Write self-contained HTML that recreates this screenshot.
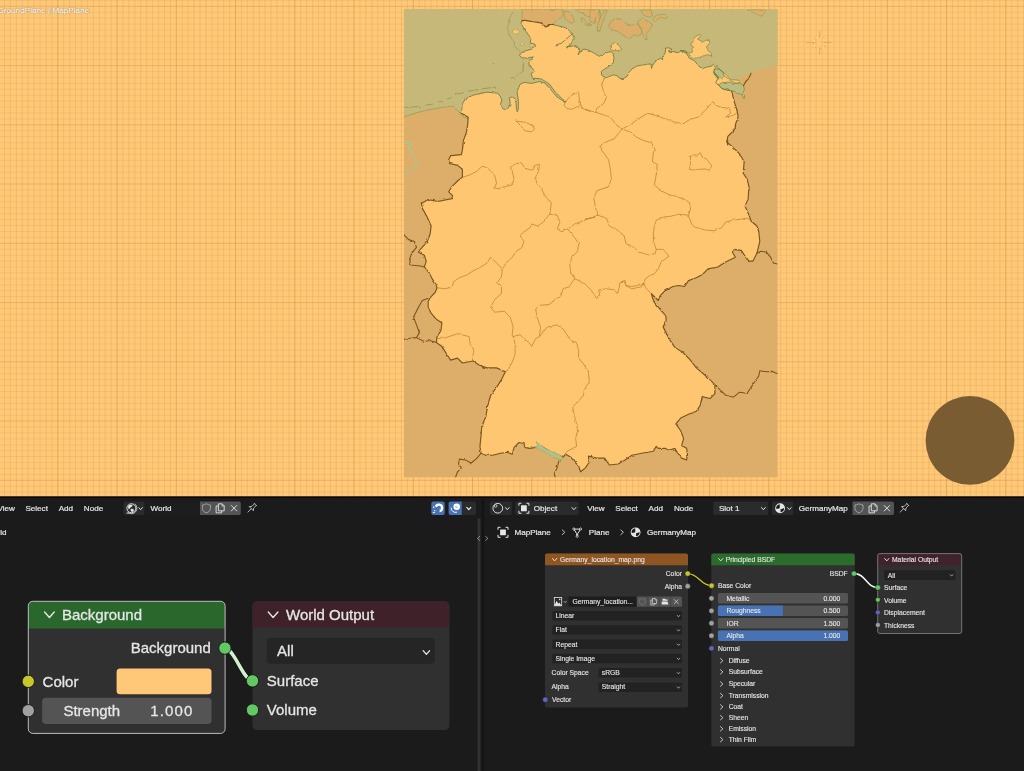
<!DOCTYPE html>
<html lang="en">
<head>
<meta charset="utf-8">
<title>Blender – GermanyMap</title>
<style>
html,body{margin:0;padding:0;}
body{width:1024px;height:771px;overflow:hidden;background:#1b1b1b;position:relative;
  font-family:"Liberation Sans",sans-serif;color:#e6e6e6;}
#vp{position:absolute;left:0;top:0;width:1024px;height:497px;overflow:hidden;background:#fec877;}
#vp svg{position:absolute;left:0;top:0;}
#vptext{position:absolute;left:-2.6px;top:6.2px;font-size:8.1px;color:#fff;white-space:nowrap;
  text-shadow:0 0 1px rgba(95,65,25,.75),0.2px 0.4px 0.9px rgba(95,65,25,.55);-webkit-text-stroke:0.15px #fff;letter-spacing:0.05px;}
#bottom{position:absolute;left:0;top:496px;width:1024px;height:275px;background:transparent;}
#bottom svg{position:absolute;left:0;top:0;will-change:transform;}
</style>
</head>
<body>
<div id="vp">
<svg width="1024" height="497" viewBox="0 0 1024 497">
<path d="M4.47,0V496.5M10.40,0V496.5M16.32,0V496.5M22.25,0V496.5M28.18,0V496.5M34.10,0V496.5M40.02,0V496.5M45.95,0V496.5M51.87,0V496.5M63.72,0V496.5M69.65,0V496.5M75.57,0V496.5M81.50,0V496.5M87.42,0V496.5M93.35,0V496.5M99.27,0V496.5M105.20,0V496.5M111.12,0V496.5M122.97,0V496.5M128.90,0V496.5M134.82,0V496.5M140.75,0V496.5M146.68,0V496.5M152.60,0V496.5M158.53,0V496.5M164.45,0V496.5M170.38,0V496.5M182.23,0V496.5M188.15,0V496.5M194.08,0V496.5M200.00,0V496.5M205.93,0V496.5M211.85,0V496.5M217.78,0V496.5M223.70,0V496.5M229.63,0V496.5M241.48,0V496.5M247.40,0V496.5M253.33,0V496.5M259.25,0V496.5M265.18,0V496.5M271.10,0V496.5M277.03,0V496.5M282.95,0V496.5M288.88,0V496.5M300.73,0V496.5M306.65,0V496.5M312.58,0V496.5M318.50,0V496.5M324.43,0V496.5M330.35,0V496.5M336.28,0V496.5M342.20,0V496.5M348.13,0V496.5M359.98,0V496.5M365.90,0V496.5M371.83,0V496.5M377.75,0V496.5M383.68,0V496.5M389.60,0V496.5M395.53,0V496.5M401.45,0V496.5M407.38,0V496.5M419.23,0V496.5M425.15,0V496.5M431.08,0V496.5M437.00,0V496.5M442.93,0V496.5M448.85,0V496.5M454.78,0V496.5M460.70,0V496.5M466.63,0V496.5M478.48,0V496.5M484.40,0V496.5M490.33,0V496.5M496.25,0V496.5M502.18,0V496.5M508.10,0V496.5M514.03,0V496.5M519.95,0V496.5M525.88,0V496.5M537.73,0V496.5M543.65,0V496.5M549.58,0V496.5M555.50,0V496.5M561.43,0V496.5M567.35,0V496.5M573.28,0V496.5M579.20,0V496.5M585.13,0V496.5M596.98,0V496.5M602.90,0V496.5M608.82,0V496.5M614.75,0V496.5M620.67,0V496.5M626.60,0V496.5M632.52,0V496.5M638.45,0V496.5M644.37,0V496.5M656.22,0V496.5M662.15,0V496.5M668.07,0V496.5M674.00,0V496.5M679.92,0V496.5M685.85,0V496.5M691.77,0V496.5M697.70,0V496.5M703.62,0V496.5M715.47,0V496.5M721.40,0V496.5M727.32,0V496.5M733.25,0V496.5M739.17,0V496.5M745.10,0V496.5M751.02,0V496.5M756.95,0V496.5M762.87,0V496.5M774.72,0V496.5M780.65,0V496.5M786.57,0V496.5M792.50,0V496.5M798.42,0V496.5M804.35,0V496.5M810.27,0V496.5M816.20,0V496.5M822.12,0V496.5M833.97,0V496.5M839.90,0V496.5M845.82,0V496.5M851.75,0V496.5M857.67,0V496.5M863.60,0V496.5M869.52,0V496.5M875.45,0V496.5M881.37,0V496.5M893.22,0V496.5M899.15,0V496.5M905.07,0V496.5M911.00,0V496.5M916.92,0V496.5M922.85,0V496.5M928.77,0V496.5M934.70,0V496.5M940.62,0V496.5M952.47,0V496.5M958.40,0V496.5M964.32,0V496.5M970.25,0V496.5M976.17,0V496.5M982.10,0V496.5M988.02,0V496.5M993.95,0V496.5M999.87,0V496.5M1011.72,0V496.5M1017.65,0V496.5M1023.57,0V496.5" stroke="rgba(150,90,25,0.17)" stroke-width="0.7" fill="none"/>
<path d="M0,0.38H1024M0,12.22H1024M0,18.15H1024M0,24.07H1024M0,30.00H1024M0,35.92H1024M0,41.85H1024M0,47.77H1024M0,53.70H1024M0,59.62H1024M0,71.47H1024M0,77.40H1024M0,83.32H1024M0,89.25H1024M0,95.17H1024M0,101.10H1024M0,107.02H1024M0,112.95H1024M0,118.87H1024M0,130.72H1024M0,136.65H1024M0,142.57H1024M0,148.50H1024M0,154.43H1024M0,160.35H1024M0,166.28H1024M0,172.20H1024M0,178.13H1024M0,189.98H1024M0,195.90H1024M0,201.83H1024M0,207.75H1024M0,213.68H1024M0,219.60H1024M0,225.53H1024M0,231.45H1024M0,237.38H1024M0,249.23H1024M0,255.15H1024M0,261.08H1024M0,267.00H1024M0,272.93H1024M0,278.85H1024M0,284.78H1024M0,290.70H1024M0,296.63H1024M0,308.48H1024M0,314.40H1024M0,320.33H1024M0,326.25H1024M0,332.18H1024M0,338.10H1024M0,344.03H1024M0,349.95H1024M0,355.88H1024M0,367.73H1024M0,373.65H1024M0,379.58H1024M0,385.50H1024M0,391.43H1024M0,397.35H1024M0,403.28H1024M0,409.20H1024M0,415.13H1024M0,426.98H1024M0,432.90H1024M0,438.83H1024M0,444.75H1024M0,450.68H1024M0,456.60H1024M0,462.53H1024M0,468.45H1024M0,474.38H1024M0,486.23H1024M0,492.15H1024" stroke="rgba(150,90,25,0.12)" stroke-width="0.7" fill="none"/>
<path d="M57.80,0V496.5M117.05,0V496.5M176.30,0V496.5M235.55,0V496.5M294.80,0V496.5M354.05,0V496.5M413.30,0V496.5M472.55,0V496.5M531.80,0V496.5M591.05,0V496.5M650.30,0V496.5M709.55,0V496.5M768.80,0V496.5M828.05,0V496.5M887.30,0V496.5M946.55,0V496.5M1005.80,0V496.5" stroke="rgba(130,75,20,0.33)" stroke-width="0.7" fill="none"/>
<path d="M0,6.30H1024M0,65.55H1024M0,124.80H1024M0,184.05H1024M0,243.30H1024M0,302.55H1024M0,361.80H1024M0,421.05H1024M0,480.30H1024" stroke="rgba(130,75,20,0.25)" stroke-width="0.7" fill="none"/>
<clipPath id="mc"><rect x="404" y="9.2" width="373.5" height="468.1"/></clipPath>
<filter id="jag" x="380" y="0" width="420" height="497" filterUnits="userSpaceOnUse"><feTurbulence type="fractalNoise" baseFrequency="0.22" numOctaves="2" seed="7" result="n"/><feDisplacementMap in="SourceGraphic" in2="n" scale="2.4" xChannelSelector="R" yChannelSelector="G"/></filter>
<g clip-path="url(#mc)">
<rect x="394" y="-0.8000000000000007" width="393.5" height="488.1" fill="#dcae69"/>
<g filter="url(#jag)">
<path d="M391.09,-3.91 792.03,-3.91 792.03,58.59 787.42,61.64 777.66,64.57 767.89,67.5 758.12,70.43 750.31,73.36 743.48,76.29 738.59,79.22 737.62,79.96 734.69,82.21 723.95,79.77 719.06,77.32 717.11,79.77 715.64,82.7 709.3,89.53 570.78,109.38 520,117.19 473.12,125 469.22,119.53 468.24,118.75 464.34,117.19 461.41,115.23 459.45,112.3 455.55,108.4 451.64,106.45 443.83,107.03 434.06,108.79 424.3,110.74 414.53,113.28 403.79,116.8 391.09,119.14Z" fill="#c6b878" stroke="none" stroke-width="0.6" stroke-linejoin="round" />
<path d="M391.09,119.14 403.79,116.8 414.53,113.28 424.3,110.74 434.06,108.79 443.83,107.03 451.64,106.45 455.55,108.4 459.45,112.3 461.41,115.23 464.34,117.19 468.24,118.75" fill="none" stroke="#8f9a5a" stroke-width="0.7" stroke-linejoin="round" stroke-linecap="round" />
<path d="M403.79,142.93 410.62,142.93 408.67,147.81 411.6,153.67 415.51,157.58 417.46,161.48 414.53,168.32 408.67,171.25 404.77,176.13" fill="none" stroke="#b0c38c" stroke-width="1.3" stroke-linejoin="round" stroke-linecap="round" />
<path d="M403.79,141.6 411.6,143.55 408.67,150" fill="none" stroke="#b0c38c" stroke-width="1.3" stroke-linejoin="round" stroke-linecap="round" />
<path d="M521.97,9.39 521.97,20.62 525.39,20.43 529.3,21.11 533.2,21.8 539.06,22.58 542.97,24.04 545.41,26.97 547.85,26.29 549.8,24.53 552.73,24.04 557.13,20.33 561.72,17.4 563.28,13.3 562.11,9.39Z" fill="#dcae69" stroke="#8f9a5a" stroke-width="0.6" stroke-linejoin="round" />
<path d="M563.67,10.66 568.85,11.84 572.46,15.55 574.41,21.6 571.78,23.26 568.36,21.8 565.23,18.87 564.45,14.77Z" fill="#dcae69" stroke="#8f9a5a" stroke-width="0.6" stroke-linejoin="round" />
<path d="M581.05,17.7 584.96,19.65 587.89,23.55 590.82,25.02 587.89,26 583.98,23.55 581.54,20.62Z" fill="#dcae69" stroke="#8f9a5a" stroke-width="0.6" stroke-linejoin="round" />
<path d="M576.17,9.39 578.12,11.84 583.01,13.3 587.89,16.72 592.77,15.74 597.66,19.65 600,20.62 600,9.39Z" fill="#dcae69" stroke="#8f9a5a" stroke-width="0.6" stroke-linejoin="round" />
<path d="M593.75,13.79 600,11.84 600,31.37 597.66,30.39 597.17,24.53 594.24,19.65Z" fill="#dcae69" stroke="#8f9a5a" stroke-width="0.6" stroke-linejoin="round" />
<path d="M597.32,31.17 599.77,30.59 604.65,15.94 607.38,9.88 605.14,9.88 600.74,16.72 597.81,24.53Z" fill="#dcae69" stroke="#8f9a5a" stroke-width="0.6" stroke-linejoin="round" />
<path d="M590,9.88 599.28,9.88 598.3,14.28 595.86,17.7 593.91,23.55 591.95,21.6 590,22.58Z" fill="#dcae69" stroke="#8f9a5a" stroke-width="0.6" stroke-linejoin="round" />
<path d="M608.55,26 611,21.11 616.37,18.67 622.23,19.65 626.13,23.55 631.02,25.51 636.88,23.55 639.8,27.46 641.76,30.39 640.78,34.79 633.95,35.76 629.06,38.69 623.2,35.27 617.34,31.37 611.48,29.41Z" fill="#dcae69" stroke="#8f9a5a" stroke-width="0.6" stroke-linejoin="round" />
<path d="M637.85,21.11 642.73,18.67 648.59,21.6 652.5,24.53 650.55,28.44 646.64,33.32 645.86,40.16 643.22,35.27 641.76,29.41 638.83,24.53Z" fill="#dcae69" stroke="#8f9a5a" stroke-width="0.6" stroke-linejoin="round" />
<path d="M640.29,9.88 651.04,9.88 652.5,15.74 648.59,17.21 643.71,15.25Z" fill="#dcae69" stroke="#8f9a5a" stroke-width="0.6" stroke-linejoin="round" />
<path d="M657.38,14.77 665.2,14.28 667.64,16.72 666.17,18.87 660.31,17.21 654.45,21.6 652.5,19.65 654.45,16.72Z" fill="#dcae69" stroke="#8f9a5a" stroke-width="0.6" stroke-linejoin="round" />
<path d="M747.38,9.88 754.22,13.3 761.05,16.23 763.5,14.77 765.94,9.88Z" fill="#dcae69" stroke="#8f9a5a" stroke-width="0.6" stroke-linejoin="round" />
<path d="M521.97,20.62 525.39,20.43 529.3,21.11 533.2,21.8 539.06,22.58 542.97,24.04 545.41,26.97 547.85,26.29 549.8,24.53 552.73,24.53 558.59,26 563.48,26.97 567.38,28.93 569.82,31.37 572.27,33.32 573.24,36.25 572.75,40.16 571.29,43.57 568.36,46.02 566.41,46.99 570.31,46.5 575.2,45.53 578.12,47.48 579.59,50.41 578.12,54.8 581.05,50.9 583.98,49.14 587.89,49.92 593.75,52.85 597.66,55.29 599.28,56.27 603.67,54.32 608.07,52.07 611.68,51.88 613.05,53.05 613.93,57.73 613.44,62.62 609.53,66.04 604.65,68.96 601.23,71.41 601.72,75.31 605.62,77.75 608.55,76.78 613.44,74.82 617.34,75.8 619.3,78.24 623.2,78.73 627.11,76.29 629.06,72.38 631.99,68.96 636.88,66.04 642.73,65.06 648.59,64.08 651.04,64.08 651.52,68.48 652.7,64.57 656.41,60.66 660.31,58.22 662.75,59.69 662.46,57.25 665.2,52.85 665.68,47.97 669.1,47.97 672.03,49.43 668.12,51.09 674.96,51.88 677.89,52.85 680.82,50.9 684.73,50.41 687.66,52.85 680,50.41 683.91,51.88 686.84,53.83 689.28,58.22 694.65,60.86 697.58,64.77 701.97,68.96 705.39,67.5 712.23,65.74 714.18,63.59 715.35,67.5 713.69,72.38 715.64,75.8 718.57,79.22 713.69,71.95 716.13,74.88 719.06,77.32 717.11,79.77 715.64,82.7 718.09,84.65 721.99,88.55 726.88,90.02 731.76,91.48 733.22,97.34 734.69,103.2 736.64,109.06 738.11,115.9 737.62,118.83 735.66,123.71 735.18,128.59 731.76,132.5 727.85,136.41 726.88,141.29 727.85,145 727.58,140 726.6,141.95 731.48,145.86 739.3,153.67 744.18,161.48 743.2,173.2 747.11,179.06 749.06,186.88 748.09,198.59 745.16,206.41 749.06,215.2 751.02,221.05 756.88,225.94 758.83,231.8 759.8,241.56 756.88,253.28 752.97,261.09 749.06,261.09 745.16,256.21 741.25,250.35 734.41,249.38 732.46,252.3 735.39,257.19 725.62,262.07 717.81,266.95 708.05,268.91 702.19,274.77 696.33,277.7 688.52,280.62 684.61,286.48 678.75,285.51 672.89,286.48 665.08,290.74 660.2,295.62 658.24,300.51 651.41,293.67 652.38,297.58 654.34,302.46 660.2,309.3 666.05,316.13 666.05,321.02 663.12,326.88 668.98,338.59 674.84,347.38 682.66,352.27 690.47,360.08 696.33,367.89 702.19,372.77 710,379.61 714.88,384.88 714.88,384.88 714.88,393.67 710,398.55 702.19,396.6 700.23,405.39 696.33,411.25 688.52,414.18 680.7,418.09 675.82,423.95 680.7,430.78 683.63,438.59 681.68,445.43 686.56,448.36 687.54,454.22 686.56,460.08 681.68,458.12 677.77,453.24 674.84,448.36 668.98,450.31 665.08,448.36 658.24,448.36 656.29,446.41 653.36,451.29 641.64,453.24 631.88,455.2 625.04,460.08 618.2,463.98 609.41,464.96 604.53,458.12 596.72,458.12 588.36,456.17 589.34,462.03 585.43,467.89 580.55,471.8 578.59,465.94 574.69,462.03 570.78,457.15 565.9,454.22 562.97,457.15 561.02,456.17 551.25,452.27 543.44,447.38 535.62,447.38 529.77,448.36 524.88,447.38 523.91,443.48 519.02,442.5 514.14,447.38 512.19,454.22 507.3,452.27 500.47,453.24 492.66,455.2 485.82,455.2 480.94,453.24 479.96,446.41 480.94,436.64 481.91,424.92 481.91,425.51 485.82,416.72 487.77,405 490.7,395.23 496.56,387.42 501.45,379.61 505.35,371.8 496.56,367.89 486.8,367.89 478.98,364.96 473.12,361.05 462.38,363.01 457.5,358.12 450.66,360.08 446.76,354.22 441.88,346.41 436.41,342.5 436.99,336.64 440.9,330.78 441.88,322.97 436.02,319.06 431.13,313.2 428.2,307.34 428.2,301.48 430.16,297.58 435.04,292.7 436.99,287.81 436.02,284.53 432.11,278.67 429.18,272.81 424.3,266.95 426.25,261.09 424.3,255.23 418.44,252.3 420.39,249.38 427.23,241.56 430.16,233.75 431.13,225.94 427.23,217.15 422.34,208.36 421.37,203.48 428.2,199.57 437.97,201.52 451.64,198.59 452.62,195.66 448.71,191.76 451.64,186.88 457.5,181.02 462.38,177.11 462.38,169.3 457.5,165.39 449.69,163.44 448.71,159.53 450.66,155.62 461.41,154.65 462.38,149.77 463.36,141.95 462.38,150 463.36,140.62 466.29,132.81 467.66,125 468.24,117.19 461.41,113.28 462.38,103.91 465.31,99.02 473.12,95.12 486.8,92.19 497.54,93.16 500.08,96.09 501.84,100 500.47,104.49 502.03,107.81 504.77,109.77 507.89,108.59 509.84,105.08 510.23,101.17 509.06,98.24 511.8,96.88 514.53,98.24 515.9,102.54 516.48,109.38 517.27,111.72 518.24,109.38 518.44,101.56 517.66,96.09 517.07,91.41 520,84.38 523.91,82.42 531.72,83.4 539.53,81.45 545.39,83.4 551.25,90.23 557.11,97.07 564.92,101.95 565.9,101.56 562.97,99.61 555.16,91.8 549.3,83.98 541.48,79.1 533.67,78.12 534.18,80 532.23,77.27 531.25,73.36 534.18,71.41 532.71,68.48 529.3,66.04 528.81,62.62 531.25,59.69 533.2,56.76 528.32,58.22 521.97,57.73 519.53,55.78 521,52.85 525.39,50.9 532.23,48.95 535.64,46.5 534.67,44.06 530.27,43.09 530.76,39.18 528.81,35.27 525.88,31.37 523.44,27.46 521,23.55Z" fill="#fec66f" stroke="none" stroke-width="0.6" stroke-linejoin="round" />
<path d="M694.65,37.23 699.53,34.3 701,35.27 697.58,39.18 703.44,42.11 705.39,40.16 709.3,40.64 709.79,42.6 706.37,46.99 708.32,50.9 711.25,53.34 711.74,55.78 708.32,54.8 704.41,55.29 701.48,56.76 698.55,58.22 694.65,58.22 689.77,55.78 688.79,52.85 692.7,51.88 691.72,48.95 693.67,46.99 690.74,45.04 691.72,42.6Z" fill="#fec66f" stroke="#6f7a42" stroke-width="0.6" stroke-linejoin="round" />
<path d="M610.31,47.97 610.7,45.53 612.46,43.87 615.88,43.38 618.81,45.23 620.76,47.97 621.45,49.92 617.83,50.51 613.93,50.7 611,49.92Z" fill="#fec66f" stroke="#6f7a42" stroke-width="0.6" stroke-linejoin="round" />
<path d="M714.18,69.02 719.06,69.02 722.97,71.95 723.95,75.86 722.48,79.57 719.06,77.32 716.13,74.88 713.69,71.95Z" fill="#bbbd7f" stroke="#6f7a42" stroke-width="0.5" stroke-linejoin="round" />
<path d="M722.48,79.57 723.95,75.86 726.88,77.81 730.29,80.55 735.18,82.89 739.57,83.18 734.69,83.67 728.83,82.21 721.99,82.7 718.09,84.65 715.64,82.7 717.11,79.77 719.06,77.32Z" fill="#fec66f" stroke="none" stroke-width="0.6" stroke-linejoin="round" />
<path d="M717.11,66.09 720.04,70 725.9,74.39 730.78,79.77 737.62,79.96 739.57,83.18 735.18,82.89 730.29,80.55 726.88,77.81 723.95,75.86 722.97,71.95 719.06,69.02 716.33,67.07Z" fill="#fec66f" stroke="#6f7a42" stroke-width="0.6" stroke-linejoin="round" />
<path d="M512.5,30.59 514.65,29.61 518.07,29.9 519.53,31.86 518.07,33.81 514.65,34 512.7,32.83Z" fill="#fec66f" stroke="#8f9a5a" stroke-width="0.5" stroke-linejoin="round" />
<path d="M509.08,19.65 510.16,19.45 510.55,22.58 509.57,23.07Z" fill="#fec66f" stroke="#8f9a5a" stroke-width="0.5" stroke-linejoin="round" />
<path d="M520.02,42.89 521.97,42.11 523.63,43.57 522.66,45.23 520.51,45.04Z" fill="#fec66f" stroke="#8f9a5a" stroke-width="0.5" stroke-linejoin="round" />
<path d="M508.98,34.3 510.25,33.81 510.94,36.74 509.77,37.71Z" fill="#fec66f" stroke="#8f9a5a" stroke-width="0.5" stroke-linejoin="round" />
<path d="M529.3,44.55 532.71,43.57 533.98,45.53 531.25,46.99Z" fill="#fec66f" stroke="#8f9a5a" stroke-width="0.5" stroke-linejoin="round" />
<path d="M404.77,107.42 420.39,106.45" fill="none" stroke="#8f9a5a" stroke-width="0.9" stroke-linejoin="round" stroke-linecap="round" />
<path d="M426.25,105.08 432.5,104.1" fill="none" stroke="#8f9a5a" stroke-width="0.9" stroke-linejoin="round" stroke-linecap="round" />
<path d="M438.95,101.95 443.24,100.98" fill="none" stroke="#8f9a5a" stroke-width="0.9" stroke-linejoin="round" stroke-linecap="round" />
<path d="M447.34,99.02 451.25,97.66" fill="none" stroke="#8f9a5a" stroke-width="0.9" stroke-linejoin="round" stroke-linecap="round" />
<path d="M455.55,94.34 463.36,92.77" fill="none" stroke="#8f9a5a" stroke-width="0.9" stroke-linejoin="round" stroke-linecap="round" />
<path d="M467.27,91.41 478.98,89.45" fill="none" stroke="#8f9a5a" stroke-width="0.9" stroke-linejoin="round" stroke-linecap="round" />
<path d="M481.33,88.87 490.7,87.7" fill="none" stroke="#8f9a5a" stroke-width="0.9" stroke-linejoin="round" stroke-linecap="round" />
<path d="M492.66,87.3 496.56,87.11" fill="none" stroke="#8f9a5a" stroke-width="0.9" stroke-linejoin="round" stroke-linecap="round" />
<path d="M718.09,84.65 721.99,82.7 728.83,82.21 734.69,83.67 739.57,83.18 743.48,85.62 744.45,89.53 742.5,93.44 744.94,95.88 743.96,98.81 741.52,94.41 737.62,93.44 733.71,91 730.78,90.51 726.88,90.02 721.99,88.55Z" fill="#bbbd7f" stroke="#6f7a42" stroke-width="0.6" stroke-linejoin="round" />
<path d="M565.9,101.56 563.95,105.47 566.88,108.4 571.76,109.38 577.62,106.45 582.5,108.4 579.57,101.56 578.59,91.8 572.73,94.73 568.83,97.66 565.9,101.56" fill="none" stroke="#c08c3a" stroke-width="0.85" stroke-linejoin="round" stroke-linecap="round" />
<path d="M516.09,121.09 523.91,122.07 531.72,125 534.65,128.91 531.72,131.84 524.88,130.86 520,125 516.09,121.09" fill="none" stroke="#c08c3a" stroke-width="0.85" stroke-linejoin="round" stroke-linecap="round" />
<path d="M604.53,78.12 601.6,83.98 603.55,91.8 606.48,97.66 603.55,103.52 596.72,108.4 595.74,112.3" fill="none" stroke="#c08c3a" stroke-width="0.85" stroke-linejoin="round" stroke-linecap="round" />
<path d="M582.5,108.4 590.31,111.33 585,109.38 595.74,112.3" fill="none" stroke="#c08c3a" stroke-width="0.85" stroke-linejoin="round" stroke-linecap="round" />
<path d="M595.74,112.3 604.53,115.23 610.39,117.19 616.25,125 622.11,128.91 629.92,125 637.73,119.14 647.5,113.28 655.31,115.23 663.12,118.16 674.84,122.07 682.66,124.02 690.47,119.14 698.28,117.19 706.09,109.38 712.93,101.56 715.86,105.47 721.72,107.42 729.53,108.4 730.51,113.28 725.62,117.19 733.44,115.23 736.37,113.28" fill="none" stroke="#c08c3a" stroke-width="0.85" stroke-linejoin="round" stroke-linecap="round" />
<path d="M622.11,128.91 614.3,138.67 604.53,142.58 600.62,145.51 601.6,150 608.44,159.53 610.39,169.3 611.37,179.06 608.44,186.88 596.72,190.78 593.79,198.59 595.74,208.36 597.7,215.2" fill="none" stroke="#c08c3a" stroke-width="0.85" stroke-linejoin="round" stroke-linecap="round" />
<path d="M622.11,128.91 631.88,132.81 635.78,136.72 643.59,140.62 651.41,142.58 655.31,150 653.36,151.72 652.38,161.48 657.27,164.41 656.29,175.16 654.34,184.92 661.17,190.78 668.98,194.69 676.8,196.64 684.61,199.57 689.49,202.5 690.47,210.31 688.52,215.2" fill="none" stroke="#c08c3a" stroke-width="0.85" stroke-linejoin="round" stroke-linecap="round" />
<path d="M597.7,215.2 606.48,218.12 609.41,225.94 618.2,230.82 624.06,235.7 626.02,243.52 633.83,247.42 639.69,252.3 649.45,255.23 655.31,253.28 656.29,249.38" fill="none" stroke="#c08c3a" stroke-width="0.85" stroke-linejoin="round" stroke-linecap="round" />
<path d="M597.7,215.2 590.86,218.12 585,219.1 595,217.15 590.31,218.12 582.5,221.05 574.69,223.98 567.85,228.87" fill="none" stroke="#c08c3a" stroke-width="0.85" stroke-linejoin="round" stroke-linecap="round" />
<path d="M688.52,215.2 691.45,223.98 694.38,226.91 704.14,229.84 713.91,230.82 721.72,227.89 725.62,222.03 733.44,220.08 741.25,219.1 747.11,218.12 750.04,220.08" fill="none" stroke="#c08c3a" stroke-width="0.85" stroke-linejoin="round" stroke-linecap="round" />
<path d="M688.52,215.2 678.75,214.22 670.94,216.17 663.12,217.15 656.29,220.08 654.34,225.94 653.36,233.75 653.36,241.56 656.29,249.38" fill="none" stroke="#c08c3a" stroke-width="0.85" stroke-linejoin="round" stroke-linecap="round" />
<path d="M656.29,249.38 663.12,249.38 668.98,256.21 665.08,259.14 661.17,262.07 658.24,268.91 654.34,273.79 649.45,275.74 645.55,278.67 642.62,284.53 631.88,286.48 626.02,285.51 625.04,280.62 621.13,282.58 622.11,281.56" fill="none" stroke="#c08c3a" stroke-width="0.85" stroke-linejoin="round" stroke-linecap="round" />
<path d="M690.47,156.6 693.4,154.65 697.3,155.23 700.23,152.7 702.19,156.6 707.07,159.53 710,163.44 711.56,165.39 710,170.27 705.12,168.91 699.26,169.3 693.4,170.27 689.49,169.3 690.47,163.44 690.47,156.6" fill="none" stroke="#c08c3a" stroke-width="0.85" stroke-linejoin="round" stroke-linecap="round" />
<path d="M462.38,177.11 469.22,175.16 477.03,171.25 481.91,166.37 486.8,167.34 490.7,171.25 494.61,175.16 496.56,182.97 494.61,187.85 498.52,188.83 504.38,186.88 512.19,184.92 514.14,179.06 512.19,171.25 510.23,167.34 516.09,163.44 521.95,163.44 524.88,168.32 531.72,170.27 534.65,165.39 539.53,164.41 538.55,171.25 535.62,177.11 536.6,182.97 541.48,188.83 545.39,196.64 551.25,202.5 550.27,212.27 549.3,214.22" fill="none" stroke="#c08c3a" stroke-width="0.85" stroke-linejoin="round" stroke-linecap="round" />
<path d="M549.3,214.22 543.44,222.03 537.58,225.94 531.72,223.98 529.77,227.89 523.91,231.8 520,235.7 523.91,241.56 521.95,247.42 516.09,251.33 512.19,257.19 506.33,263.05 502.42,268.91" fill="none" stroke="#c08c3a" stroke-width="0.85" stroke-linejoin="round" stroke-linecap="round" />
<path d="M502.42,268.91 496.56,263.05 490.7,257.19 486.8,263.05 480.94,266.95 473.12,270.86 467.27,274.77 459.45,277.7 453.59,281.6 452.62,285.86 445.78,288.79 436.99,287.81" fill="none" stroke="#c08c3a" stroke-width="0.85" stroke-linejoin="round" stroke-linecap="round" />
<path d="M502.42,268.91 501.45,276.72 497.54,282.58 501.45,285.86 501.45,293.67 494.61,299.53 490.7,307.34 494.61,312.23 504.38,311.25 510.23,317.11 513.16,326.88 512.19,334.69 513.16,336.64 515.12,344.45 515.12,354.22 512.19,362.03 508.28,369.84 505.35,371.8" fill="none" stroke="#c08c3a" stroke-width="0.85" stroke-linejoin="round" stroke-linecap="round" />
<path d="M549.3,214.22 557.11,215.2 560.04,222.03 557.11,228.87 561.99,231.8 567.85,228.87 569.8,231.8 574.69,237.66 578.59,243.52 577.62,251.33 571.76,257.19 569.8,265 570.78,272.81 574.69,278.67" fill="none" stroke="#c08c3a" stroke-width="0.85" stroke-linejoin="round" stroke-linecap="round" />
<path d="M513.16,336.64 520,334.69 523.91,338.59 528.79,342.5 531.72,346.41 535.62,338.59 539.53,336.64 540.51,326.88 537.58,319.06 535.62,309.3 539.53,305.39 549.3,304.41 555.16,299.53 561.02,295.62 562.97,288.79 568.83,286.84 573.71,280 574.69,278.67" fill="none" stroke="#c08c3a" stroke-width="0.85" stroke-linejoin="round" stroke-linecap="round" />
<path d="M539.53,336.64 547.34,326.88 557.11,324.92 562.97,328.83 566.88,334.69 570.78,340.55 576.64,342.5 578.59,350.31 578.59,358.12 583.48,363.98 588.36,371.8 589.34,381.56 584.45,389.38 583.48,395.23 578.59,401.09 572.73,406.95 574.69,416.72 576.64,424.53 577.62,430 577.62,430 575.66,438.59 576.64,446.41 566.88,451.29 562.97,457.15" fill="none" stroke="#c08c3a" stroke-width="0.85" stroke-linejoin="round" stroke-linecap="round" />
<path d="M436.99,338.59 445.78,337.62 457.5,333.71 469.22,336.64 470.2,344.45 474.1,350.31 472.15,358.12 473.12,361.05" fill="none" stroke="#c08c3a" stroke-width="0.85" stroke-linejoin="round" stroke-linecap="round" />
<path d="M574.69,278.67 582.5,282.58 585,283.91 590.86,289.77 596.72,298.55 599.65,295.62 598.67,289.77 606.48,288.79 614.3,289.77 617.23,293.67 619.18,287.81 620.16,281.95 624.06,280.98 626.02,285.86 631.88,288.79 641.64,286.84 643.59,281.95 645.55,287.81 651.41,293.67" fill="none" stroke="#c08c3a" stroke-width="0.85" stroke-linejoin="round" stroke-linecap="round" />
<path d="M403.79,234.73 408.67,239.61 414.53,241.56 416.48,247.42 411.6,253.28 409.65,259.14 410.62,265 420.39,265.98 424.3,266.95" fill="none" stroke="#7a5520" stroke-width="1.1" stroke-linejoin="round" stroke-linecap="round" />
<path d="M430.16,297.58 422.34,300.51 418.44,307.34 413.55,317.11 416.48,324.92 419.41,332.73 416.48,337.62 424.3,341.52 430.16,340.55 436.41,342.5" fill="none" stroke="#7a5520" stroke-width="1.1" stroke-linejoin="round" stroke-linecap="round" />
<path d="M403.79,339.57 409.65,338.2 416.48,337.62" fill="none" stroke="#7a5520" stroke-width="1.1" stroke-linejoin="round" stroke-linecap="round" />
<path d="M480.94,453.24 477.03,458.12 471.17,463.01 465.31,460.08 459.45,459.1 458.48,463.98 461.41,467.89 457.5,471.8 455.55,477.27" fill="none" stroke="#7a5520" stroke-width="1.1" stroke-linejoin="round" stroke-linecap="round" />
<path d="M559.06,460.08 557.11,467.89 554.18,473.75 555.16,477.27" fill="none" stroke="#7a5520" stroke-width="1.1" stroke-linejoin="round" stroke-linecap="round" />
<path d="M714.88,384.88 721.72,391.33 725.62,395.23 733.44,397.19 739.3,392.3 747.11,393.28 751.02,387.42 754.92,381.56 758.83,375.7 759.8,370.82 766.64,371.8 772.5,371.41 777.38,373.75" fill="none" stroke="#7a5520" stroke-width="1.1" stroke-linejoin="round" stroke-linecap="round" />
<path d="M756.88,253.28 760.78,251.33 766.64,252.3 770.55,257.19 773.48,263.05 777.38,264.02" fill="none" stroke="#7a5520" stroke-width="1.1" stroke-linejoin="round" stroke-linecap="round" />
<path d="M751,73.22 748.85,78.3 745.62,81.72 743.48,85.62" fill="none" stroke="#7a5520" stroke-width="1.1" stroke-linejoin="round" stroke-linecap="round" />
<path d="M572.27,33.81 568.36,37.23 564.45,40.64 561.04,43.57 558.59,44.06 556.15,45.04" fill="none" stroke="#6f7a42" stroke-width="0.9" stroke-linejoin="round" stroke-linecap="round" />
<path d="M513.18,11.84 509.28,18.67 508.01,27.46 509.28,36.25 514.16,41.62 514.65,46.99 520.02,50.9" fill="none" stroke="#6f7a42" stroke-width="0.6" stroke-linejoin="round" stroke-linecap="round" opacity="0.55"/>
<path d="M522.95,59.69 523.44,65.55 521.97,72.38 513.67,77.27" fill="none" stroke="#6f7a42" stroke-width="0.6" stroke-linejoin="round" stroke-linecap="round" opacity="0.55"/>
<path d="M492.66,63.48 494.61,64.06" fill="none" stroke="#6f7a42" stroke-width="0.6" stroke-linejoin="round" stroke-linecap="round" opacity="0.55"/>
<path d="M512.19,77.15 515.12,79.1" fill="none" stroke="#6f7a42" stroke-width="0.6" stroke-linejoin="round" stroke-linecap="round" opacity="0.55"/>
<path d="M522.93,64.45 523.91,71.29" fill="none" stroke="#6f7a42" stroke-width="0.6" stroke-linejoin="round" stroke-linecap="round" opacity="0.55"/>
<path d="M552.73,24.53 558.59,26 563.48,26.97 567.38,28.93 569.82,31.37 572.27,33.32 573.24,36.25 572.75,40.16 571.29,43.57 568.36,46.02 566.41,46.99 570.31,46.5 575.2,45.53 578.12,47.48 579.59,50.41 578.12,54.8 581.05,50.9 583.98,49.14 587.89,49.92 593.75,52.85 597.66,55.29 599.28,56.27 603.67,54.32 608.07,52.07 611.68,51.88 613.05,53.05 613.93,57.73 613.44,62.62 609.53,66.04 604.65,68.96 601.23,71.41 601.72,75.31 605.62,77.75 608.55,76.78 613.44,74.82 617.34,75.8 619.3,78.24 623.2,78.73 627.11,76.29 629.06,72.38 631.99,68.96 636.88,66.04 642.73,65.06 648.59,64.08 651.04,64.08 651.52,68.48 652.7,64.57 656.41,60.66 660.31,58.22 662.75,59.69 662.46,57.25 665.2,52.85 665.68,47.97 669.1,47.97 672.03,49.43 668.12,51.09 674.96,51.88 677.89,52.85 680.82,50.9 684.73,50.41 687.66,52.85 680,50.41 683.91,51.88 686.84,53.83 689.28,58.22 694.65,60.86 697.58,64.77 701.97,68.96 705.39,67.5 712.23,65.74 714.18,63.59 715.35,67.5 713.69,72.38 715.64,75.8 718.57,79.22 713.69,71.95 716.13,74.88 719.06,77.32 717.11,79.77 715.64,82.7 718.09,84.65 721.99,88.55 726.88,90.02 731.76,91.48" fill="none" stroke="#6f7a42" stroke-width="0.85" stroke-linejoin="round" stroke-linecap="round" />
<path d="M461.41,113.28 462.38,103.91 465.31,99.02 473.12,95.12 486.8,92.19 497.54,93.16 500.08,96.09 501.84,100 500.47,104.49 502.03,107.81 504.77,109.77 507.89,108.59 509.84,105.08 510.23,101.17 509.06,98.24 511.8,96.88 514.53,98.24 515.9,102.54 516.48,109.38 517.27,111.72 518.24,109.38 518.44,101.56 517.66,96.09 517.07,91.41 520,84.38 523.91,82.42 531.72,83.4 539.53,81.45 545.39,83.4 551.25,90.23 557.11,97.07 564.92,101.95 565.9,101.56 562.97,99.61 555.16,91.8 549.3,83.98 541.48,79.1 533.67,78.12 534.18,80 532.23,77.27 531.25,73.36 534.18,71.41 532.71,68.48 529.3,66.04 528.81,62.62 531.25,59.69 533.2,56.76 528.32,58.22 521.97,57.73 519.53,55.78 521,52.85 525.39,50.9 532.23,48.95 535.64,46.5 534.67,44.06 530.27,43.09 530.76,39.18 528.81,35.27 525.88,31.37 523.44,27.46 521,23.55 521.97,20.62" fill="none" stroke="#6f7a42" stroke-width="0.85" stroke-linejoin="round" stroke-linecap="round" />
<path d="M521.97,20.62 525.39,20.43 529.3,21.11 533.2,21.8 539.06,22.58 542.97,24.04 545.41,26.97 547.85,26.29 549.8,24.53 552.73,24.53" fill="none" stroke="#7a5520" stroke-width="1.15" stroke-linejoin="round" stroke-linecap="round" />
<path d="M731.76,91.48 733.22,97.34 734.69,103.2 736.64,109.06 738.11,115.9 737.62,118.83 735.66,123.71 735.18,128.59 731.76,132.5 727.85,136.41 726.88,141.29 727.85,145 727.58,140 726.6,141.95 731.48,145.86 739.3,153.67 744.18,161.48 743.2,173.2 747.11,179.06 749.06,186.88 748.09,198.59 745.16,206.41 749.06,215.2 751.02,221.05 756.88,225.94 758.83,231.8 759.8,241.56 756.88,253.28 752.97,261.09 749.06,261.09 745.16,256.21 741.25,250.35 734.41,249.38 732.46,252.3 735.39,257.19 725.62,262.07 717.81,266.95 708.05,268.91 702.19,274.77 696.33,277.7 688.52,280.62 684.61,286.48 678.75,285.51 672.89,286.48 665.08,290.74 660.2,295.62 658.24,300.51 651.41,293.67 652.38,297.58 654.34,302.46 660.2,309.3 666.05,316.13 666.05,321.02 663.12,326.88 668.98,338.59 674.84,347.38 682.66,352.27 690.47,360.08 696.33,367.89 702.19,372.77 710,379.61 714.88,384.88 714.88,384.88 714.88,393.67 710,398.55 702.19,396.6 700.23,405.39 696.33,411.25 688.52,414.18 680.7,418.09 675.82,423.95 680.7,430.78 683.63,438.59 681.68,445.43 686.56,448.36 687.54,454.22 686.56,460.08 681.68,458.12 677.77,453.24 674.84,448.36 668.98,450.31 665.08,448.36 658.24,448.36 656.29,446.41 653.36,451.29 641.64,453.24 631.88,455.2 625.04,460.08 618.2,463.98 609.41,464.96 604.53,458.12 596.72,458.12 588.36,456.17 589.34,462.03 585.43,467.89 580.55,471.8 578.59,465.94 574.69,462.03 570.78,457.15 565.9,454.22 562.97,457.15 561.02,456.17 551.25,452.27 543.44,447.38 535.62,447.38 529.77,448.36 524.88,447.38 523.91,443.48 519.02,442.5 514.14,447.38 512.19,454.22 507.3,452.27 500.47,453.24 492.66,455.2 485.82,455.2 480.94,453.24 479.96,446.41 480.94,436.64 481.91,424.92 481.91,425.51 485.82,416.72 487.77,405 490.7,395.23 496.56,387.42 501.45,379.61 505.35,371.8 496.56,367.89 486.8,367.89 478.98,364.96 473.12,361.05 462.38,363.01 457.5,358.12 450.66,360.08 446.76,354.22 441.88,346.41 436.41,342.5 436.99,336.64 440.9,330.78 441.88,322.97 436.02,319.06 431.13,313.2 428.2,307.34 428.2,301.48 430.16,297.58 435.04,292.7 436.99,287.81 436.02,284.53 432.11,278.67 429.18,272.81 424.3,266.95 426.25,261.09 424.3,255.23 418.44,252.3 420.39,249.38 427.23,241.56 430.16,233.75 431.13,225.94 427.23,217.15 422.34,208.36 421.37,203.48 428.2,199.57 437.97,201.52 451.64,198.59 452.62,195.66 448.71,191.76 451.64,186.88 457.5,181.02 462.38,177.11 462.38,169.3 457.5,165.39 449.69,163.44 448.71,159.53 450.66,155.62 461.41,154.65 462.38,149.77 463.36,141.95 462.38,150 463.36,140.62 466.29,132.81 467.66,125 468.24,117.19 461.41,113.28" fill="none" stroke="#7a5520" stroke-width="1.15" stroke-linejoin="round" stroke-linecap="round" />
<path d="M536.02,441.33 541.09,445.43 546.37,448.95 552.81,451.88 560.62,455.39 563.36,458.52 560.04,459.69 554.18,457.73 548.32,454.22 542.46,450.7 537.19,448.36 533.28,446.8 537.58,446.41Z" fill="#b1c187" stroke="#8f9a5a" stroke-width="0.4" stroke-linejoin="round" />
</g>
</g>
<circle cx="970" cy="440.4" r="44.4" fill="#7a5c33"/>
<g fill="none" stroke-linecap="butt">
<circle cx="819.7" cy="42.6" r="6.3" stroke="#ffdc9a" stroke-width="0.9" stroke-dasharray="2.47 2.47"/>
<circle cx="819.7" cy="42.6" r="6.3" stroke="#dfa85c" stroke-width="0.9" stroke-dasharray="2.47 2.47" stroke-dashoffset="2.47"/>
<path d="M806.2,42.6H815.6M823.6,42.6H831.6M819.7,30.8V37.6M819.7,47.4V54.4" stroke="#d09b50" stroke-width="0.8" opacity="0.75"/>
</g>
</svg>
<div id="vptext">GroundPlane | MapPlane</div>
</div>
<div id="bottom">
<svg id="ui" width="1024" height="275" viewBox="0 496 1024 275" font-family="'Liberation Sans', sans-serif">
<rect x="0" y="496.5" width="1024" height="274.5" fill="#1b1b1b" />
<rect x="0" y="496.5" width="1024" height="1.7" fill="#0b0a07" />
<rect x="0" y="498.2" width="1024" height="2.4" fill="#1c1a1f" />
<rect x="481.6" y="498.2" width="2.6" height="273" fill="#141414" />
<rect x="477.6" y="518.4" width="2.9" height="253" fill="#323232" />
<rect x="28.3" y="601.3" width="196.8" height="132.1" fill="#303030" rx="4.5" ry="4.5" />
<path d="M28.3,628.4V605.8a4.5,4.5 0 0 1 4.5,-4.5H220.6a4.5,4.5 0 0 1 4.5,4.5V628.4Z" fill="#2a672c"/>
<rect x="28.3" y="601.3" width="196.8" height="132.1" fill="none" rx="4.5" ry="4.5" stroke="#bdbdbd" stroke-width="1"/>
<path d="M44.57,612.04L49.4,617.56L54.23,612.04" fill="none" stroke="#e6e6e6" stroke-width="1.38" stroke-linecap="round" stroke-linejoin="round"/>
<text x="62" y="620.2" font-size="15" fill="#e6e6e6" stroke="#e6e6e6" stroke-width="0.3" >Background</text>
<text x="210.8" y="653.2" font-size="15" fill="#e6e6e6" stroke="#e6e6e6" stroke-width="0.3" text-anchor="end" >Background</text>
<text x="42.6" y="686.7" font-size="15" fill="#e6e6e6" stroke="#e6e6e6" stroke-width="0.3" >Color</text>
<rect x="116.6" y="668.5" width="94.9" height="25.8" fill="#ffc878" rx="3.5" ry="3.5" />
<rect x="42.1" y="697.8" width="169.4" height="26.2" fill="#545454" rx="3.8" ry="3.8" />
<text x="63.4" y="715.6" font-size="15" fill="#e6e6e6" stroke="#e6e6e6" stroke-width="0.3" >Strength</text>
<text x="193.4" y="715.6" font-size="15" fill="#e6e6e6" stroke="#e6e6e6" stroke-width="0.3" text-anchor="end" letter-spacing="1.1">1.000</text>
<rect x="252.5" y="601.3" width="196.9" height="128.8" fill="#303030" rx="4.5" ry="4.5" />
<path d="M252.5,627.5V605.8a4.5,4.5 0 0 1 4.5,-4.5H444.9a4.5,4.5 0 0 1 4.5,4.5V627.5Z" fill="#3e2129"/>
<path d="M268.27,612.04L273.1,617.56L277.93,612.04" fill="none" stroke="#e6e6e6" stroke-width="1.38" stroke-linecap="round" stroke-linejoin="round"/>
<text x="286" y="620.2" font-size="15" fill="#e6e6e6" stroke="#e6e6e6" stroke-width="0.3" >World Output</text>
<rect x="266.6" y="638" width="168.2" height="25.8" fill="#252525" rx="3.8" ry="3.8" />
<text x="277.1" y="656.3" font-size="15" fill="#e6e6e6" stroke="#e6e6e6" stroke-width="0.3" >All</text>
<path d="M423.25,650.8L426.4,654.4L429.55,650.8" fill="none" stroke="#e0e0e0" stroke-width="1.3" stroke-linecap="round" stroke-linejoin="round"/>
<text x="266.8" y="686" font-size="15" fill="#e6e6e6" stroke="#e6e6e6" stroke-width="0.3" >Surface</text>
<text x="266.8" y="714.8" font-size="15" fill="#e6e6e6" stroke="#e6e6e6" stroke-width="0.3" >Volume</text>
<path d="M224.9,648.1C234,648.1 243.5,680.9 252.5,680.9" fill="none" stroke="#181818" stroke-width="5.4"/>
<path d="M224.9,648.1C234,648.1 243.5,680.9 252.5,680.9" fill="none" stroke="#d2efd2" stroke-width="3.5"/>
<circle cx="224.9" cy="648.1" r="6.2" fill="#63c763" stroke="#1a1a1a" stroke-width="0.992"/>
<circle cx="28.3" cy="681.4" r="6.2" fill="#c7c729" stroke="#1a1a1a" stroke-width="0.992"/>
<circle cx="28.3" cy="710.7" r="6.2" fill="#a1a1a1" stroke="#1a1a1a" stroke-width="0.992"/>
<circle cx="252.5" cy="680.9" r="6.2" fill="#63c763" stroke="#1a1a1a" stroke-width="0.992"/>
<circle cx="252.5" cy="710" r="6.2" fill="#63c763" stroke="#1a1a1a" stroke-width="0.992"/>
<rect x="545" y="553.6" width="143" height="154" fill="#303030" rx="2" ry="2" />
<path d="M545,565.2V555.6a2,2 0 0 1 2,-2H686a2,2 0 0 1 2,2V565.2Z" fill="#8f5621"/>
<path d="M552.5,558.5L554.6,560.9L556.7,558.5" fill="none" stroke="#efefef" stroke-width="0.9" stroke-linecap="round" stroke-linejoin="round"/>
<text x="559.9" y="562.2" font-size="6.75" fill="#e6e6e6" stroke="#e6e6e6" stroke-width="0.12" >Germany_location_map.png</text>
<text x="681.9" y="575.6" font-size="6.75" fill="#e6e6e6" stroke="#e6e6e6" stroke-width="0.12" text-anchor="end" >Color</text>
<text x="681.9" y="588.7" font-size="6.75" fill="#e6e6e6" stroke="#e6e6e6" stroke-width="0.12" text-anchor="end" >Alpha</text>
<path d="M554.5,596.5H568.2V606.7H554.5a1.5,1.5 0 0 1 -1.5,-1.5V598a1.5,1.5 0 0 1 1.5,-1.5Z" fill="#2b2b2b"/>
<g transform="translate(558,601.6)"><rect x="-3.7" y="-4.2" width="7.4" height="8.4" fill="none" stroke="#e6e6e6" stroke-width="0.8"/><path d="M-3.7,4.2L-1.4,-0.8L0.2,2.2L1.3,0.8L3.7,4.2Z" fill="#e6e6e6"/><circle cx="1.7" cy="-2.1" r="0.8" fill="#e6e6e6"/></g>
<path d="M564.045,601.34L565.2,602.66L566.355,601.34" fill="none" stroke="#dddddd" stroke-width="0.6" stroke-linecap="round" stroke-linejoin="round"/>
<rect x="568.5" y="596.5" width="68.3" height="10.2" fill="#1d1d1d" />
<text x="572.5" y="603.8" font-size="6.75" fill="#e6e6e6" stroke="#e6e6e6" stroke-width="0.12" >Germany_location...</text>
<path d="M636.8,596.5H680.5a1.5,1.5 0 0 1 1.5,1.5V605.2a1.5,1.5 0 0 1 -1.5,1.5H636.8V596.5Z" fill="#545454"/>
<rect x="552.4" y="611" width="129.6" height="9.5" fill="#222222" rx="1.5" ry="1.5" />
<text x="555.6" y="618.1" font-size="6.75" fill="#e6e6e6" stroke="#e6e6e6" stroke-width="0.12" >Linear</text>
<path d="M677.24,615.38L678.5,616.82L679.76,615.38" fill="none" stroke="#dddddd" stroke-width="0.65" stroke-linecap="round" stroke-linejoin="round"/>
<rect x="552.4" y="625.3" width="129.6" height="9.5" fill="#222222" rx="1.5" ry="1.5" />
<text x="555.6" y="632.4" font-size="6.75" fill="#e6e6e6" stroke="#e6e6e6" stroke-width="0.12" >Flat</text>
<path d="M677.24,629.68L678.5,631.12L679.76,629.68" fill="none" stroke="#dddddd" stroke-width="0.65" stroke-linecap="round" stroke-linejoin="round"/>
<rect x="552.4" y="639.6" width="129.6" height="9.5" fill="#222222" rx="1.5" ry="1.5" />
<text x="555.6" y="646.7" font-size="6.75" fill="#e6e6e6" stroke="#e6e6e6" stroke-width="0.12" >Repeat</text>
<path d="M677.24,643.98L678.5,645.42L679.76,643.98" fill="none" stroke="#dddddd" stroke-width="0.65" stroke-linecap="round" stroke-linejoin="round"/>
<rect x="552.4" y="653.8" width="129.6" height="9.5" fill="#222222" rx="1.5" ry="1.5" />
<text x="555.6" y="660.9" font-size="6.75" fill="#e6e6e6" stroke="#e6e6e6" stroke-width="0.12" >Single Image</text>
<path d="M677.24,658.18L678.5,659.62L679.76,658.18" fill="none" stroke="#dddddd" stroke-width="0.65" stroke-linecap="round" stroke-linejoin="round"/>
<text x="551.6" y="675" font-size="6.75" fill="#e6e6e6" stroke="#e6e6e6" stroke-width="0.12" >Color Space</text>
<rect x="598.6" y="668.1" width="83.4" height="9.5" fill="#222222" rx="1.5" ry="1.5" />
<text x="601.8" y="675" font-size="6.75" fill="#e6e6e6" stroke="#e6e6e6" stroke-width="0.12" >sRGB</text>
<path d="M677.24,672.48L678.5,673.92L679.76,672.48" fill="none" stroke="#dddddd" stroke-width="0.65" stroke-linecap="round" stroke-linejoin="round"/>
<text x="551.6" y="689.3" font-size="6.75" fill="#e6e6e6" stroke="#e6e6e6" stroke-width="0.12" >Alpha</text>
<rect x="598.6" y="682.4" width="83.4" height="9.5" fill="#222222" rx="1.5" ry="1.5" />
<text x="601.8" y="689.3" font-size="6.75" fill="#e6e6e6" stroke="#e6e6e6" stroke-width="0.12" >Straight</text>
<path d="M677.24,686.78L678.5,688.22L679.76,686.78" fill="none" stroke="#dddddd" stroke-width="0.65" stroke-linecap="round" stroke-linejoin="round"/>
<text x="552" y="701.6" font-size="6.75" fill="#e6e6e6" stroke="#e6e6e6" stroke-width="0.12" >Vector</text>
<rect x="711.3" y="553.6" width="143.4" height="193" fill="#303030" rx="2" ry="2" />
<path d="M711.3,565.2V555.6a2,2 0 0 1 2,-2H852.7a2,2 0 0 1 2,2V565.2Z" fill="#2b6b2c"/>
<path d="M718.6,558.5L720.7,560.9L722.8,558.5" fill="none" stroke="#efefef" stroke-width="0.9" stroke-linecap="round" stroke-linejoin="round"/>
<text x="725.7" y="562.2" font-size="6.75" fill="#e6e6e6" stroke="#e6e6e6" stroke-width="0.12" >Principled BSDF</text>
<text x="847.7" y="575.6" font-size="6.75" fill="#e6e6e6" stroke="#e6e6e6" stroke-width="0.12" text-anchor="end" >BSDF</text>
<text x="717.9" y="587.9" font-size="6.75" fill="#e6e6e6" stroke="#e6e6e6" stroke-width="0.12" >Base Color</text>
<rect x="717.9" y="593.1" width="130.1" height="10.4" fill="#545454" rx="1.6" ry="1.6" />
<text x="726.5" y="600.75" font-size="6.75" fill="#e6e6e6" stroke="#e6e6e6" stroke-width="0.12" >Metallic</text>
<text x="840.3" y="600.75" font-size="6.75" fill="#e6e6e6" stroke="#e6e6e6" stroke-width="0.12" text-anchor="end" >0.000</text>
<circle cx="711.5" cy="598.3" r="2.6" fill="#a1a1a1" stroke="#1a1a1a" stroke-width="0.416"/>
<rect x="717.9" y="605.6" width="130.1" height="10.4" fill="#545454" rx="1.6" ry="1.6" />
<path d="M719.5,605.6H782.95V616H719.5a1.6,1.6 0 0 1 -1.6,-1.6V607.2a1.6,1.6 0 0 1 1.6,-1.6Z" fill="#4772b3"/>
<text x="726.5" y="613.25" font-size="6.75" fill="#e6e6e6" stroke="#e6e6e6" stroke-width="0.12" >Roughness</text>
<text x="840.3" y="613.25" font-size="6.75" fill="#e6e6e6" stroke="#e6e6e6" stroke-width="0.12" text-anchor="end" >0.500</text>
<circle cx="711.5" cy="610.8" r="2.6" fill="#a1a1a1" stroke="#1a1a1a" stroke-width="0.416"/>
<rect x="717.9" y="618" width="130.1" height="10.4" fill="#545454" rx="1.6" ry="1.6" />
<text x="726.5" y="625.65" font-size="6.75" fill="#e6e6e6" stroke="#e6e6e6" stroke-width="0.12" >IOR</text>
<text x="840.3" y="625.65" font-size="6.75" fill="#e6e6e6" stroke="#e6e6e6" stroke-width="0.12" text-anchor="end" >1.500</text>
<circle cx="711.5" cy="623.2" r="2.6" fill="#a1a1a1" stroke="#1a1a1a" stroke-width="0.416"/>
<rect x="717.9" y="630.5" width="130.1" height="10.4" fill="#545454" rx="1.6" ry="1.6" />
<rect x="717.9" y="630.5" width="130.1" height="10.4" fill="#4772b3" rx="1.6" ry="1.6" />
<text x="726.5" y="638.15" font-size="6.75" fill="#e6e6e6" stroke="#e6e6e6" stroke-width="0.12" >Alpha</text>
<text x="840.3" y="638.15" font-size="6.75" fill="#e6e6e6" stroke="#e6e6e6" stroke-width="0.12" text-anchor="end" >1.000</text>
<circle cx="711.5" cy="635.7" r="2.6" fill="#a1a1a1" stroke="#1a1a1a" stroke-width="0.416"/>
<text x="717.9" y="650.9" font-size="6.75" fill="#e6e6e6" stroke="#e6e6e6" stroke-width="0.12" >Normal</text>
<path d="M720.465,658.515L722.935,660.7L720.465,662.885" fill="none" stroke="#e6e6e6" stroke-width="0.8" stroke-linecap="round" stroke-linejoin="round"/>
<text x="728.7" y="662.9" font-size="6.75" fill="#e6e6e6" stroke="#e6e6e6" stroke-width="0.12" >Diffuse</text>
<path d="M720.465,669.715L722.935,671.9L720.465,674.085" fill="none" stroke="#e6e6e6" stroke-width="0.8" stroke-linecap="round" stroke-linejoin="round"/>
<text x="728.7" y="674.1" font-size="6.75" fill="#e6e6e6" stroke="#e6e6e6" stroke-width="0.12" >Subsurface</text>
<path d="M720.465,681.815L722.935,684L720.465,686.185" fill="none" stroke="#e6e6e6" stroke-width="0.8" stroke-linecap="round" stroke-linejoin="round"/>
<text x="728.7" y="686.2" font-size="6.75" fill="#e6e6e6" stroke="#e6e6e6" stroke-width="0.12" >Specular</text>
<path d="M720.465,693.415L722.935,695.6L720.465,697.785" fill="none" stroke="#e6e6e6" stroke-width="0.8" stroke-linecap="round" stroke-linejoin="round"/>
<text x="728.7" y="697.8" font-size="6.75" fill="#e6e6e6" stroke="#e6e6e6" stroke-width="0.12" >Transmission</text>
<path d="M720.465,704.715L722.935,706.9L720.465,709.085" fill="none" stroke="#e6e6e6" stroke-width="0.8" stroke-linecap="round" stroke-linejoin="round"/>
<text x="728.7" y="709.1" font-size="6.75" fill="#e6e6e6" stroke="#e6e6e6" stroke-width="0.12" >Coat</text>
<path d="M720.465,715.515L722.935,717.7L720.465,719.885" fill="none" stroke="#e6e6e6" stroke-width="0.8" stroke-linecap="round" stroke-linejoin="round"/>
<text x="728.7" y="719.9" font-size="6.75" fill="#e6e6e6" stroke="#e6e6e6" stroke-width="0.12" >Sheen</text>
<path d="M720.465,726.615L722.935,728.8L720.465,730.985" fill="none" stroke="#e6e6e6" stroke-width="0.8" stroke-linecap="round" stroke-linejoin="round"/>
<text x="728.7" y="731" font-size="6.75" fill="#e6e6e6" stroke="#e6e6e6" stroke-width="0.12" >Emission</text>
<path d="M720.465,737.415L722.935,739.6L720.465,741.785" fill="none" stroke="#e6e6e6" stroke-width="0.8" stroke-linecap="round" stroke-linejoin="round"/>
<text x="728.7" y="741.8" font-size="6.75" fill="#e6e6e6" stroke="#e6e6e6" stroke-width="0.12" >Thin Film</text>
<rect x="877.7" y="553.6" width="84" height="79.9" fill="#303030" rx="2.2" ry="2.2" />
<path d="M877.7,565.2V555.8a2.2,2.2 0 0 1 2.2,-2.2H959.5a2.2,2.2 0 0 1 2.2,2.2V565.2Z" fill="#40222a"/>
<rect x="877.7" y="553.6" width="84" height="79.9" fill="none" rx="2.2" ry="2.2" stroke="#a8a8a8" stroke-width="0.6"/>
<path d="M884.7,558.5L886.8,560.9L888.9,558.5" fill="none" stroke="#efefef" stroke-width="0.9" stroke-linecap="round" stroke-linejoin="round"/>
<text x="892" y="562.2" font-size="6.75" fill="#e6e6e6" stroke="#e6e6e6" stroke-width="0.12" >Material Output</text>
<rect x="884" y="570.2" width="71.4" height="9.7" fill="#222222" rx="1.5" ry="1.5" />
<text x="887.7" y="577.7" font-size="6.75" fill="#e6e6e6" stroke="#e6e6e6" stroke-width="0.12" >All</text>
<path d="M950.34,574.68L951.6,576.12L952.86,574.68" fill="none" stroke="#dddddd" stroke-width="0.65" stroke-linecap="round" stroke-linejoin="round"/>
<text x="884" y="590.2" font-size="6.75" fill="#e6e6e6" stroke="#e6e6e6" stroke-width="0.12" >Surface</text>
<circle cx="877.9" cy="587.5" r="2.4" fill="#63c763" stroke="#1a1a1a" stroke-width="0.4"/>
<text x="884" y="602.5" font-size="6.75" fill="#e6e6e6" stroke="#e6e6e6" stroke-width="0.12" >Volume</text>
<circle cx="877.9" cy="599.8" r="2.4" fill="#63c763" stroke="#1a1a1a" stroke-width="0.4"/>
<text x="884" y="615.1" font-size="6.75" fill="#e6e6e6" stroke="#e6e6e6" stroke-width="0.12" >Displacement</text>
<circle cx="877.9" cy="612.4" r="2.4" fill="#6363c7" stroke="#1a1a1a" stroke-width="0.4"/>
<text x="884" y="627.7" font-size="6.75" fill="#e6e6e6" stroke="#e6e6e6" stroke-width="0.12" >Thickness</text>
<circle cx="877.9" cy="625" r="2.4" fill="#a1a1a1" stroke="#1a1a1a" stroke-width="0.4"/>
<path d="M687.7,573.6C699,573.6 700,585.7 711.6,585.7" fill="none" stroke="#151515" stroke-width="2.6"/>
<path d="M687.7,573.6C699,573.6 700,585.7 711.6,585.7" fill="none" stroke="#c7c729" stroke-width="1.35"/>
<path d="M854,573.6C866,573.6 866,587.5 877.9,587.5" fill="none" stroke="#151515" stroke-width="2.6"/>
<path d="M854,573.6C866,573.6 866,587.5 877.9,587.5" fill="none" stroke="#eef7ea" stroke-width="1.6"/>
<circle cx="687.7" cy="573.6" r="2.6" fill="#c7c729" stroke="#1a1a1a" stroke-width="0.416"/>
<circle cx="687.7" cy="586.2" r="2.6" fill="#a1a1a1" stroke="#1a1a1a" stroke-width="0.416"/>
<circle cx="545.3" cy="699.7" r="2.6" fill="#6363c7" stroke="#1a1a1a" stroke-width="0.416"/>
<circle cx="854" cy="573.6" r="2.6" fill="#63c763" stroke="#1a1a1a" stroke-width="0.416"/>
<circle cx="711.6" cy="585.7" r="2.6" fill="#c7c729" stroke="#1a1a1a" stroke-width="0.416"/>
<circle cx="711.5" cy="648.3" r="2.6" fill="#6363c7" stroke="#1a1a1a" stroke-width="0.416"/>
<circle cx="877.9" cy="587.5" r="2.6" fill="#63c763" stroke="#1a1a1a" stroke-width="0.416"/>
<g transform="translate(642.3,601.6) scale(0.72)"><path transform="translate(0,0)" d="M0,-4.4C1.6,-3.4 2.9,-3.2 4,-3.2V0.2C4,2.4 2.2,4 0,4.8C-2.2,4 -4,2.4 -4,0.2V-3.2C-2.9,-3.2 -1.6,-3.4 0,-4.4Z" fill="none" stroke="#808080" stroke-width="0.8" stroke-linejoin="round"/></g>
<g transform="translate(653.6,601.6) scale(0.72)"><g transform="translate(0,0)" fill="none" stroke="#e6e6e6" stroke-width="0.9" stroke-linejoin="round"><path d="M-1.6,-4.4H2.2L4.2,-2.4V2.6H-1.6Z"/><path d="M2.0,-4.4V-2.2H4.2" stroke-width="0.7"/><path d="M-1.6,-2.2H-3.9V4.6H1.6V2.6"/></g></g>
<g transform="translate(665,601.6) scale(0.78)"><g transform="translate(0,0)" fill="#e6e6e6"><path d="M-4.2,-0.2H3.2L4.4,3.8H-4.2Z"/><path d="M-3.2,-1.2V-3.8H0L0.8,-2.8H3.4V-1.2Z"/></g></g>
<g transform="translate(676.3,601.6) scale(0.72)"><path transform="translate(0,0)" d="M-2.7,-2.7L2.7,2.7M2.7,-2.7L-2.7,2.7" stroke="#e6e6e6" stroke-width="0.95" stroke-linecap="round"/></g>
<path d="M647.9,596.5V606.7M659.3,596.5V606.7M670.7,596.5V606.7" stroke="#3a3a3a" stroke-width="0.5"/>
<text x="-2.6" y="511.15" font-size="8.1" fill="#e6e6e6" stroke="#e6e6e6" stroke-width="0.2" >View</text>
<text x="25.4" y="511.15" font-size="8.1" fill="#e6e6e6" stroke="#e6e6e6" stroke-width="0.2" >Select</text>
<text x="58.7" y="511.15" font-size="8.1" fill="#e6e6e6" stroke="#e6e6e6" stroke-width="0.2" >Add</text>
<text x="83.8" y="511.15" font-size="8.1" fill="#e6e6e6" stroke="#e6e6e6" stroke-width="0.2" >Node</text>
<path d="M125.8,501.4H144.7V515.1H125.8a2.2,2.2 0 0 1 -2.2,-2.2V503.6a2.2,2.2 0 0 1 2.2,-2.2Z" fill="#2b2b2b"/>
<g transform="translate(131.4,508.25)"><circle r="4.5" fill="none" stroke="#e6e6e6" stroke-width="0.95"/><path d="M-3.3,-2.2C-2.4,-3.6 -0.2,-4 0.9,-3.2C1.6,-2.4 0.8,-1.7 -0.1,-1.2C-0.9,-0.8 -1.6,-0.2 -2,0.8C-2.5,1.6 -3.4,0.6 -3.3,-2.2Z" fill="#e6e6e6"/><path d="M-0.7,1C0.3,0.2 1.8,0.6 2.4,1.4C2.6,2.4 1.8,3.4 0.6,3.7C-0.4,3.4 -1.1,2 -0.7,1Z" fill="#e6e6e6"/><path d="M3.15,-4.51A5.5,5.5 0 1 1 -3.89,3.89" fill="none" stroke="#e6e6e6" stroke-width="0.75"/><path d="M-4.9,4.9H-2.2" stroke="#e6e6e6" stroke-width="0.8"/></g>
<path d="M138.815,507.63L140.6,509.67L142.385,507.63" fill="none" stroke="#e0e0e0" stroke-width="1" stroke-linecap="round" stroke-linejoin="round"/>
<rect x="144.7" y="501.4" width="55.3" height="13.7" fill="#1d1d1d" />
<text x="150.6" y="511.15" font-size="8.1" fill="#e6e6e6" stroke="#e6e6e6" stroke-width="0.2" >World</text>
<path d="M200,501.4H238.6a2.2,2.2 0 0 1 2.2,2.2V512.9a2.2,2.2 0 0 1 -2.2,2.2H200V501.4Z" fill="#545454"/>
<path transform="translate(206.4,508.15)" d="M0,-4.4C1.6,-3.4 2.9,-3.2 4,-3.2V0.2C4,2.4 2.2,4 0,4.8C-2.2,4 -4,2.4 -4,0.2V-3.2C-2.9,-3.2 -1.6,-3.4 0,-4.4Z" fill="none" stroke="#b4b4b4" stroke-width="0.8" stroke-linejoin="round"/>
<g transform="translate(220,508.25)" fill="none" stroke="#e6e6e6" stroke-width="0.9" stroke-linejoin="round"><path d="M-1.6,-4.4H2.2L4.2,-2.4V2.6H-1.6Z"/><path d="M2.0,-4.4V-2.2H4.2" stroke-width="0.7"/><path d="M-1.6,-2.2H-3.9V4.6H1.6V2.6"/></g>
<path transform="translate(234,508.25)" d="M-2.7,-2.7L2.7,2.7M2.7,-2.7L-2.7,2.7" stroke="#e6e6e6" stroke-width="0.95" stroke-linecap="round"/>
<g transform="translate(251.7,508.25) rotate(45)" fill="none" stroke="#c4c4c4" stroke-width="0.85" stroke-linejoin="round" stroke-linecap="round"><path d="M-1.7,-5.2H1.7M-1.2,-5.2V-1.6L-2.9,0.6H2.9L1.2,-1.6V-5.2M0,0.6V5.4"/></g>
<rect x="431.3" y="501.4" width="13.4" height="13.7" fill="#4772b3" rx="2.2" ry="2.2" />
<g transform="translate(438,508.25)"><path d="M-2.19,-1.23A3.2,3.2 0 1 1 1.46,2.75" fill="none" stroke="#ffffff" stroke-width="2.3"/><circle cx="-4.3" cy="-0.9" r="0.75" fill="#ffffff"/><circle cx="-3.3" cy="2.4" r="0.7" fill="#ffffff"/><path d="M-5.2,4.3H-3.2" stroke="#ffffff" stroke-width="1"/><path d="M-3.4,-1.9L-1.1,-0.6M0.3,3.6L2.3,1.2" stroke="#4772b3" stroke-width="0.7"/></g>
<path d="M450.8,501.4H461.9V515.1H450.8a2.2,2.2 0 0 1 -2.2,-2.2V503.6a2.2,2.2 0 0 1 2.2,-2.2Z" fill="#4772b3"/>
<g transform="translate(455.2,508.25)"><circle cx="1.5" cy="-1.5" r="3.3" fill="#ffffff"/><path d="M0.2,-1.6L2.2,-0.9" stroke="#4772b3" stroke-width="0.7"/><path d="M-4.0,-0.6A4.4,4.4 0 0 0 1.8,3.9" fill="none" stroke="#ffffff" stroke-width="0.95"/></g>
<path d="M461.9,501.4H473.8a2.2,2.2 0 0 1 2.2,2.2V512.9a2.2,2.2 0 0 1 -2.2,2.2H461.9V501.4Z" fill="#2b2b2b"/>
<path d="M466.805,507.41L468.8,509.69L470.795,507.41" fill="none" stroke="#f2f2f2" stroke-width="1.15" stroke-linecap="round" stroke-linejoin="round"/>
<text x="-14.5" y="534.7" font-size="8.1" fill="#e6e6e6" stroke="#e6e6e6" stroke-width="0.2" >World</text>
<rect x="489.8" y="501.4" width="22.1" height="13.7" fill="#2b2b2b" rx="2.2" ry="2.2" />
<g transform="translate(497.8,508.25)" fill="none" stroke="#e6e6e6"><circle r="4.85" stroke-width="0.95"/><circle cx="-2.2" cy="-2.3" r="1.3" stroke-width="0.75"/></g>
<path d="M505.515,507.63L507.3,509.67L509.085,507.63" fill="none" stroke="#e0e0e0" stroke-width="1" stroke-linecap="round" stroke-linejoin="round"/>
<rect x="515.3" y="501.4" width="63.3" height="13.7" fill="#2b2b2b" rx="2.2" ry="2.2" />
<g transform="translate(523.9,508.25)"><rect x="-2.9" y="-2.9" width="5.8" height="5.8" rx="0.5" fill="#e6e6e6"/><path d="M-5,-2.5V-5H-2.5M2.5,-5H5V-2.5M5,2.5V5H2.5M-2.5,5H-5V2.5" fill="none" stroke="#e6e6e6" stroke-width="1" stroke-linejoin="round"/></g>
<text x="533.75" y="511.15" font-size="8.1" fill="#e6e6e6" stroke="#e6e6e6" stroke-width="0.2" >Object</text>
<path d="M572.01,507.57L573.9,509.73L575.79,507.57" fill="none" stroke="#e0e0e0" stroke-width="1" stroke-linecap="round" stroke-linejoin="round"/>
<text x="587.2" y="511.15" font-size="8.1" fill="#e6e6e6" stroke="#e6e6e6" stroke-width="0.2" >View</text>
<text x="615.3" y="511.15" font-size="8.1" fill="#e6e6e6" stroke="#e6e6e6" stroke-width="0.2" >Select</text>
<text x="648.6" y="511.15" font-size="8.1" fill="#e6e6e6" stroke="#e6e6e6" stroke-width="0.2" >Add</text>
<text x="673.9" y="511.15" font-size="8.1" fill="#e6e6e6" stroke="#e6e6e6" stroke-width="0.2" >Node</text>
<rect x="713.3" y="501.4" width="55" height="13.7" fill="#2b2b2b" rx="2.2" ry="2.2" />
<text x="718.9" y="511.15" font-size="8.1" fill="#e6e6e6" stroke="#e6e6e6" stroke-width="0.2" >Slot 1</text>
<path d="M761.51,507.57L763.4,509.73L765.29,507.57" fill="none" stroke="#e0e0e0" stroke-width="1" stroke-linecap="round" stroke-linejoin="round"/>
<path d="M774.2,501.4H793.4V515.1H774.2a2.2,2.2 0 0 1 -2.2,-2.2V503.6a2.2,2.2 0 0 1 2.2,-2.2Z" fill="#2b2b2b"/>
<g transform="translate(780.1,508.25)"><circle r="4.9" fill="#e6e6e6"/><path d="M-0.35,-0.1V-4.0A4.0,4.0 0 0 0 -4.0,0.6Q-2,0.5 -0.35,-0.1Z" fill="#1b1b1b"/><path d="M0.45,0.9Q2.6,0.6 4.0,-0.2A4.0,4.0 0 0 1 0.45,4.0Z" fill="#1b1b1b"/></g>
<path d="M787.515,507.63L789.3,509.67L791.085,507.63" fill="none" stroke="#e0e0e0" stroke-width="1" stroke-linecap="round" stroke-linejoin="round"/>
<rect x="793.4" y="501.4" width="59.1" height="13.7" fill="#1d1d1d" />
<text x="798.8" y="511.15" font-size="8.1" fill="#e6e6e6" stroke="#e6e6e6" stroke-width="0.2" >GermanyMap</text>
<path d="M852.5,501.4H891.8a2.2,2.2 0 0 1 2.2,2.2V512.9a2.2,2.2 0 0 1 -2.2,2.2H852.5V501.4Z" fill="#545454"/>
<path transform="translate(859,508.15)" d="M0,-4.4C1.6,-3.4 2.9,-3.2 4,-3.2V0.2C4,2.4 2.2,4 0,4.8C-2.2,4 -4,2.4 -4,0.2V-3.2C-2.9,-3.2 -1.6,-3.4 0,-4.4Z" fill="none" stroke="#b4b4b4" stroke-width="0.8" stroke-linejoin="round"/>
<g transform="translate(872.9,508.25)" fill="none" stroke="#e6e6e6" stroke-width="0.9" stroke-linejoin="round"><path d="M-1.6,-4.4H2.2L4.2,-2.4V2.6H-1.6Z"/><path d="M2.0,-4.4V-2.2H4.2" stroke-width="0.7"/><path d="M-1.6,-2.2H-3.9V4.6H1.6V2.6"/></g>
<path transform="translate(886.9,508.25)" d="M-2.7,-2.7L2.7,2.7M2.7,-2.7L-2.7,2.7" stroke="#e6e6e6" stroke-width="0.95" stroke-linecap="round"/>
<g transform="translate(904,508.25) rotate(45)" fill="none" stroke="#c4c4c4" stroke-width="0.85" stroke-linejoin="round" stroke-linecap="round"><path d="M-1.7,-5.2H1.7M-1.2,-5.2V-1.6L-2.9,0.6H2.9L1.2,-1.6V-5.2M0,0.6V5.4"/></g>
<path d="M479.705,536.445L477.495,538.4L479.705,540.355" fill="none" stroke="#9a9a9a" stroke-width="0.9" stroke-linecap="round" stroke-linejoin="round"/>
<path d="M485.695,536.445L487.905,538.4L485.695,540.355" fill="none" stroke="#9a9a9a" stroke-width="0.9" stroke-linecap="round" stroke-linejoin="round"/>
<g transform="translate(503,532.3)"><rect x="-2.9" y="-2.9" width="5.8" height="5.8" rx="0.5" fill="#e6e6e6"/><path d="M-5,-2.5V-5H-2.5M2.5,-5H5V-2.5M5,2.5V5H2.5M-2.5,5H-5V2.5" fill="none" stroke="#e6e6e6" stroke-width="1" stroke-linejoin="round"/></g>
<text x="514.4" y="534.8" font-size="8.1" fill="#e6e6e6" stroke="#e6e6e6" stroke-width="0.2" >MapPlane</text>
<path d="M562.3,530L564.9,532.3L562.3,534.6" fill="none" stroke="#cccccc" stroke-width="0.9" stroke-linecap="round" stroke-linejoin="round"/>
<g transform="translate(577.2,532.3)" stroke="#e6e6e6" fill="none" stroke-width="1"><path d="M-3.3,-3.2H3.3L0.5,1.4V3.2H-0.5V1.4L-3.3,-3.2" stroke-linejoin="round"/><circle cx="-3.4" cy="-3.3" r="1.05" fill="#1b1b1b" stroke-width="0.8"/><circle cx="3.4" cy="-3.3" r="1.05" fill="#1b1b1b" stroke-width="0.8"/><circle cx="0" cy="4" r="1.05" fill="#1b1b1b" stroke-width="0.8"/></g>
<text x="588.8" y="534.8" font-size="8.1" fill="#e6e6e6" stroke="#e6e6e6" stroke-width="0.2" >Plane</text>
<path d="M620.8,530L623.4,532.3L620.8,534.6" fill="none" stroke="#cccccc" stroke-width="0.9" stroke-linecap="round" stroke-linejoin="round"/>
<g transform="translate(635.6,532.3)"><circle r="4.9" fill="#e6e6e6"/><path d="M-0.35,-0.1V-4.0A4.0,4.0 0 0 0 -4.0,0.6Q-2,0.5 -0.35,-0.1Z" fill="#1b1b1b"/><path d="M0.45,0.9Q2.6,0.6 4.0,-0.2A4.0,4.0 0 0 1 0.45,4.0Z" fill="#1b1b1b"/></g>
<text x="647" y="534.8" font-size="8.1" fill="#e6e6e6" stroke="#e6e6e6" stroke-width="0.2" >GermanyMap</text>
</svg>
</div>
</body>
</html>
